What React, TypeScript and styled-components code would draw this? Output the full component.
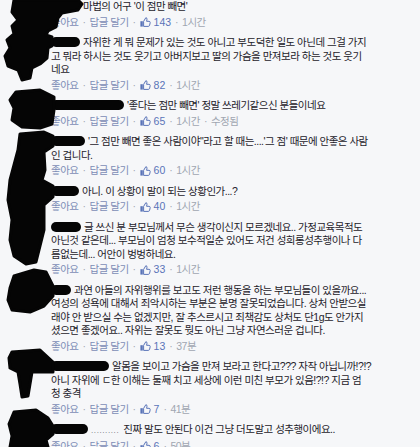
import styled, { createGlobalStyle } from 'styled-components';

const GlobalStyle = createGlobalStyle`
  html, body {
    margin: 0;
    padding: 0;
    background: #f6f7f9;
  }
  body {
    font-family: 'Liberation Sans', 'Noto Sans CJK KR', sans-serif;
  }
`;

const Page = styled.div`
  position: relative;
  width: 420px;
  height: 447px;
  overflow: hidden;
  background: #f6f7f9;
`;

const CommentList = styled.div`
  display: flex;
  flex-direction: column;
  gap: 7px;
  padding-left: 51px;
`;

const Comment = styled.div`
  display: flex;
  flex-direction: column;
`;

const Body = styled.div`
  font-size: 10.5px;
  line-height: 13.5px;
  letter-spacing: -0.5px;
  color: #1d2129;
`;

const Line = styled.div`
  white-space: nowrap;
`;

const NameMask = styled.span<{ $w: number }>`
  display: inline-block;
  width: ${({ $w }) => $w}px;
  height: 10px;
  margin-right: 3px;
  border-radius: 5px;
  background: #050505;
  vertical-align: -1px;
`;

const Dots = styled.span`
  color: #6a6f78;
  font-size: 8px;
  letter-spacing: 0.6px;
  margin-right: 4px;
`;

const Meta = styled.div`
  display: flex;
  align-items: center;
  margin-top: 2px;
  font-size: 10.5px;
  line-height: 13.5px;
  letter-spacing: -0.5px;
  white-space: nowrap;
`;

const Action = styled.span`
  color: #7d8db6;
`;

const Sep = styled.span`
  color: #a3a9b4;
  margin: 0 4px;
`;

const Likes = styled.span`
  display: inline-flex;
  align-items: center;
  gap: 3px;
  color: #5a74b8;
  letter-spacing: 0;
`;

const Time = styled.span`
  color: #a0a6b1;
`;

const Redaction = styled.svg`
  position: absolute;
  left: 0;
  top: 0;
  pointer-events: none;
`;

function ThumbIcon() {
  return (
    <svg width="11" height="10" viewBox="0 0 11 10">
      <rect x="0.4" y="4.2" width="2.4" height="5.4" fill="#5a74b8" />
      <path
        d="M3.6 9.4H8.2c.8 0 1.3-.5 1.4-1.1l.6-2.7c.1-.7-.4-1.3-1.1-1.3H6.6l.4-2.1c.1-.8-.4-1.5-1.1-1.6L3.6 4.4Z"
        fill="none"
        stroke="#5a74b8"
        strokeWidth="1"
        strokeLinejoin="round"
      />
    </svg>
  );
}

type Item = {
  mask: number;
  dots?: boolean;
  lines: string[];
  likes: number;
  time: string;
  edited?: boolean;
};

const comments: Item[] = [
  { mask: 29, lines: ["마법의 어구 '이 점만 빼면'"], likes: 143, time: '1시간' },
  {
    mask: 29,
    lines: [
      '자위한 게 뭐 문제가 있는 것도 아니고 부도덕한 일도 아닌데 그걸 가지',
      '고 뭐라 하시는 것도 웃기고 아버지보고 딸의 가슴을 만져보라 하는 것도 웃기',
      '네요',
    ],
    likes: 82,
    time: '1시간',
  },
  {
    mask: 73,
    lines: ["'좋다는 점만 빼면' 정말 쓰레기같으신 분들이네요"],
    likes: 65,
    time: '1시간',
    edited: true,
  },
  {
    mask: 34,
    lines: [
      '\'그 점만 빼면 좋은 사람이야"라고 할 때는....\'그 점\' 때문에 안좋은 사람',
      '인 겁니다.',
    ],
    likes: 60,
    time: '1시간',
  },
  { mask: 28, lines: ['아니. 이 상황이 말이 되는 상황인가...?'], likes: 40, time: '1시간' },
  {
    mask: 30,
    lines: [
      '글 쓰신 분 부모님께서 무슨 생각이신지 모르겠네요.. 가정교육목적도',
      '아닌것 같은데... 부모님이 엄청 보수적일순 있어도 저건 성희롱성추행이나 다',
      '름없는데... 어안이 벙벙하네요.',
    ],
    likes: 33,
    time: '1시간',
  },
  {
    mask: 20,
    lines: [
      '과연 아들의 자위행위를 보고도 저런 행동을 하는 부모님들이 있을까요...',
      '여성의 성욕에 대해서 죄악시하는 부분은 분명 잘못되었습니다. 상처 안받으실',
      '래야 안 받으실 수는 없겠지만, 잘 추스르시고 죄책감도 상처도 단1g도 안가지',
      '셨으면 좋겠어요.. 자위는 잘못도 뭣도 아닌 그냥 자연스러운 겁니다.',
    ],
    likes: 13,
    time: '37분',
  },
  {
    mask: 58,
    lines: [
      '알몸을 보이고 가슴을 만져 보라고 한다고??? 자작 아닙니까!?!?',
      '아니 자위에 ㄷ한 이해는 둘째 치고 세상에 이런 미친 부모가 있음!?!? 지금 엄',
      '청 충격',
    ],
    likes: 7,
    time: '41분',
  },
  {
    mask: 37,
    dots: true,
    lines: ['진짜 말도 안된다 이건 그냥 더도말고 성추행이에요..'],
    likes: 6,
    time: '50분',
  },
];

// scribbled-over profile pictures
const blobs = [
  'M14,0 L78,0 L82,4 L78,10 L62,13 L58,18 L56,27 L48,31 L46,35 L52,37 L52,46 L48,48 L47,58 L40,64 L32,68 L30,78 L22,80 L18,70 L8,66 L5,56 L10,48 L7,40 L14,34 L12,26 L18,20 L12,12 Z',
  'M16,92 L40,90 L54,97 L54,110 L52,124 L40,128 L22,127 L12,120 L14,108 L10,100 Z',
  'M20,134 L44,132 L53,136 L53,146 L44,152 L45,170 L42,180 L53,186 L53,197 L44,205 L44,230 L40,246 L36,262 L26,264 L14,256 L10,240 L12,220 L8,200 L10,180 L14,165 L18,150 Z',
  'M14,276 L34,270 L46,272 L53,286 L53,296 L44,306 L30,312 L12,310 L8,300 L10,288 Z',
  'M12,352 L40,350 L53,362 L53,372 L44,372 L32,372 L30,384 L28,396 L22,397 L20,384 L18,372 L10,368 L9,358 Z',
  'M14,412 L36,410 L48,418 L53,426 L53,434 L46,440 L48,447 L10,447 L12,436 L9,424 Z',
];

export default function App() {
  return (
    <Page>
      <GlobalStyle />
      <CommentList>
        {comments.map((c, i) => (
          <Comment key={i}>
            <Body>
              {c.lines.map((line, j) => (
                <Line key={j}>
                  {j === 0 && <NameMask $w={c.mask} />}
                  {j === 0 && c.dots && <Dots>..........</Dots>}
                  {line}
                </Line>
              ))}
            </Body>
            <Meta>
              <Action>좋아요</Action>
              <Sep>·</Sep>
              <Action>답글 달기</Action>
              <Sep>·</Sep>
              <Likes>
                <ThumbIcon />
                {c.likes}
              </Likes>
              <Sep>·</Sep>
              <Time>{c.time}</Time>
              {c.edited && (
                <>
                  <Sep>·</Sep>
                  <Time>수정됨</Time>
                </>
              )}
            </Meta>
          </Comment>
        ))}
      </CommentList>
      <Redaction width="420" height="447" viewBox="0 0 420 447">
        {blobs.map((d, i) => (
          <path
            key={i}
            d={d}
            fill="#050505"
            stroke="#050505"
            strokeWidth="3"
            strokeLinejoin="round"
          />
        ))}
      </Redaction>
    </Page>
  );
}
